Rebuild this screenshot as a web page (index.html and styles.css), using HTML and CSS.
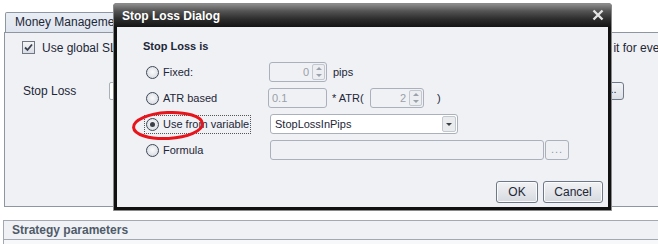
FILE: index.html
```html
<!DOCTYPE html>
<html>
<head>
    <title>Stop Loss Dialog</title>
    <link rel="stylesheet" href="styles.css">
</head>
<body>
    <div class="screen">
        <div class="tabs">
            <div class="tab">Money Management</div>
        </div>
        <div class="panel">
            <div class="check-row">
                <span class="checkbox">
                    <svg width="11" height="11" viewBox="0 0 11 11"><path d="M2 5.5 L4.5 8 L9 2.5" fill="none" stroke="#3a4250" stroke-width="1.8"/></svg>
                </span>
                <span class="check-label">Use global SL/PT</span>
                <span class="check-tail">it for eve</span>
            </div>
            <div class="sl-row">
                <span class="sl-label">Stop Loss</span>
                <span class="sl-field">0</span>
                <span class="sl-btn">...</span>
            </div>
        </div>
        <div class="section">
            <div class="section-head">Strategy parameters</div>
            <div class="section-body"></div>
        </div>

        <div class="dialog">
            <div class="titlebar">
                <span class="title">Stop Loss Dialog</span>
                <svg class="close" width="12" height="12" viewBox="0 0 12 12"><path d="M1.5 1.5 L10.5 10.5 M10.5 1.5 L1.5 10.5" stroke="#e4e4e4" stroke-width="2.4"/></svg>
            </div>
            <div class="dialog-body">
                <div class="heading">Stop Loss is</div>
                <div class="options">
                    <label class="opt"><span class="radio"></span>Fixed:</label>
                    <div class="ctrl">
                        <span class="spin w58"><span class="val">0</span><span class="spin-btns"><i class="up"></i><i class="down"></i></span></span>
                        <span class="unit">pips</span>
                    </div>

                    <label class="opt"><span class="radio"></span>ATR based</label>
                    <div class="ctrl">
                        <span class="field w59">0.1</span>
                        <span class="atr">* ATR(</span>
                        <span class="spin w54"><span class="val">2</span><span class="spin-btns"><i class="up"></i><i class="down"></i></span></span>
                        <span class="paren">)</span>
                    </div>

                    <label class="opt focus"><span class="radio on"></span>Use from variable</label>
                    <div class="ctrl">
                        <span class="combo">StopLossInPips<span class="combo-btn"><i class="down dark"></i></span></span>
                    </div>

                    <label class="opt"><span class="radio"></span>Formula</label>
                    <div class="ctrl">
                        <span class="field w274"></span>
                        <span class="ellipsis">...</span>
                    </div>
                </div>
                <div class="buttons">
                    <button class="btn ok">OK</button>
                    <button class="btn cancel">Cancel</button>
                </div>
            </div>
            <svg class="mark" width="76" height="32" viewBox="0 0 76 32"><ellipse cx="37" cy="15.5" rx="34.5" ry="13" transform="rotate(-3 37 15.5)" fill="none" stroke="#e8141b" stroke-width="3"/></svg>
        </div>
    </div>
</body>
</html>
```

FILE: styles.css
```css
body { margin: 0; background: #fff; font-family: "Liberation Sans", Arial, sans-serif; font-size: 11px; color: #1d2737; overflow: hidden; }
.screen { position: relative; width: 658px; height: 244px; overflow: hidden; padding-top: 12px; box-sizing: border-box; }

/* background window */
.tabs { display: flex; padding-left: 5px; position: relative; z-index: 1; }
.tab { height: 19px; line-height: 18px; padding: 0 12px 0 9px; border: 1px solid #8e96a2; border-bottom: none; border-radius: 2px 2px 0 0; background: linear-gradient(#e9edf4, #dfe5ef); font-size: 12px; color: #1d2737; }
.panel { margin-left: 4px; width: 690px; height: 175px; box-sizing: border-box; border: 1px solid #8e96a2; background: #f0f1f5; padding: 7px 0 0 17px; }
.check-row { display: flex; align-items: center; height: 15px; }
.checkbox { flex: none; width: 13px; height: 13px; box-sizing: border-box; border: 1px solid #6f7884; background: linear-gradient(#f4f5f7, #d9dde3); display: flex; align-items: center; justify-content: center; }
.check-label { margin-left: 7px; font-size: 12px; }
.check-tail { margin-left: 478px; font-size: 12px; white-space: nowrap; }
.sl-row { display: flex; align-items: center; margin-top: 27px; height: 18px; }
.sl-label { width: 86px; padding-left: 1px; font-size: 12px; }
.sl-field { width: 60px; height: 18px; box-sizing: border-box; border: 1px solid #a9b0ba; border-radius: 2px; background: #fff; padding-left: 3px; line-height: 16px; }
.sl-btn { margin-left: 431px; width: 24px; height: 18px; box-sizing: border-box; border: 1px solid #707a88; border-radius: 3px; background: linear-gradient(#f3f4f6, #dde1e6); text-align: center; line-height: 13px; }

.section { margin: 13px 0 0 3px; width: 690px; border: 1px solid #a3a9b3; border-bottom: none; }
.section-head { height: 18px; line-height: 18px; padding-left: 8px; font-weight: bold; font-size: 12px; color: #4f5b69; background: #f0f1f5; border-bottom: 1px solid #a3a9b3; }
.section-body { height: 20px; background: #f7f8fa; }

/* dialog window */
.dialog { position: absolute; z-index: 2; left: 113px; top: 3px; width: 499px; height: 208px; box-sizing: border-box; border: 1px solid #8a8a8a; border-radius: 3px 3px 0 0; display: flex; flex-direction: column; background: #111; }
.titlebar { height: 23px; display: flex; align-items: center; justify-content: space-between; padding: 0 7px 0 8px; background: linear-gradient(#8c8c8c, #555 30%, #2d2d2d 65%, #151515); }
.title { color: #fff; font-weight: bold; font-size: 12px; }
.close { margin-top: -1px; }
.dialog-body { flex: 1; margin: 0 3px 3px 3px; background: #f0f1f5; display: flex; flex-direction: column; padding: 12px 5px 4px 26px; }
.heading { font-weight: bold; height: 14px; line-height: 14px; }
.options { display: grid; grid-template-columns: 126px auto; grid-auto-rows: 20px; row-gap: 6px; margin-top: 9px; }
.opt { display: flex; align-items: center; align-self: center; margin-left: 1px; height: 19px; box-sizing: border-box; border: 1px dotted transparent; padding: 0 1px; justify-self: start; }
.opt.focus { border-color: #555; }
.radio { width: 13px; height: 13px; box-sizing: border-box; border-radius: 50%; border: 1px solid #3e4956; background: radial-gradient(circle at 50% 45%, #fbfbfc 0, #e3e6ea 55%, #c9ced5 100%); margin-right: 4px; position: relative; }
.radio.on::after { content: ""; position: absolute; left: 3px; top: 3px; width: 5px; height: 5px; border-radius: 50%; background: #3a3f47; }
.ctrl { display: flex; align-items: center; }

.spin, .field, .combo { height: 20px; box-sizing: border-box; border: 1px solid #aab1bc; border-radius: 3px; display: flex; align-items: center; }
.spin { padding-right: 1px; }
.w58 { width: 58px; }
.w54 { width: 54px; }
.w59 { width: 59px; margin-left: -1px; }
.w274 { width: 274px; margin-left: 1px; }
.val { flex: 1; text-align: right; color: #9aa0a8; padding-right: 3px; }
.field { color: #9aa0a8; padding-left: 3px; }
.spin-btns { width: 13px; height: 16px; box-sizing: border-box; border: 1px solid #c3c8cf; border-radius: 2px; background: #eceef1; display: flex; flex-direction: column; align-items: center; justify-content: space-around; }
i.up, i.down { display: block; width: 0; height: 0; border-left: 3px solid transparent; border-right: 3px solid transparent; }
i.up { border-bottom: 3px solid #9aa2ad; }
i.down { border-top: 3px solid #9aa2ad; }
i.down.dark { border-top-color: #3b3f45; }
.unit { margin-left: 6px; }
.atr { width: 38px; margin-left: 5px; }
.paren { margin-left: 13px; }
.combo { width: 188px; margin-left: 1px; background: #fff; padding: 0 1px 0 4px; justify-content: space-between; }
.combo-btn { width: 14px; height: 16px; box-sizing: border-box; border: 1px solid #c3c8cf; border-radius: 2px; background: #eaebed; display: flex; align-items: center; justify-content: center; }
.ellipsis { margin-left: 1px; width: 24px; height: 20px; box-sizing: border-box; border: 1px solid #a9b1bd; border-radius: 3px; background: #eef0f4; color: #8f98a4; text-align: center; line-height: 16px; letter-spacing: 1px; }

.buttons { margin-top: auto; display: flex; justify-content: flex-end; gap: 5px; }
.btn { height: 22px; box-sizing: border-box; border: 1px solid #6f7886; border-radius: 3px; background: linear-gradient(#f1f2f4, #e4e6ea 50%, #d6dade); font-family: "Liberation Sans", Arial, sans-serif; font-size: 12px; color: #1d2737; padding: 0; box-shadow: inset 0 0 0 1px #fafbfc; }
.ok { width: 42px; }
.cancel { width: 60px; }

.mark { position: absolute; left: 17px; top: 106px; }
```
